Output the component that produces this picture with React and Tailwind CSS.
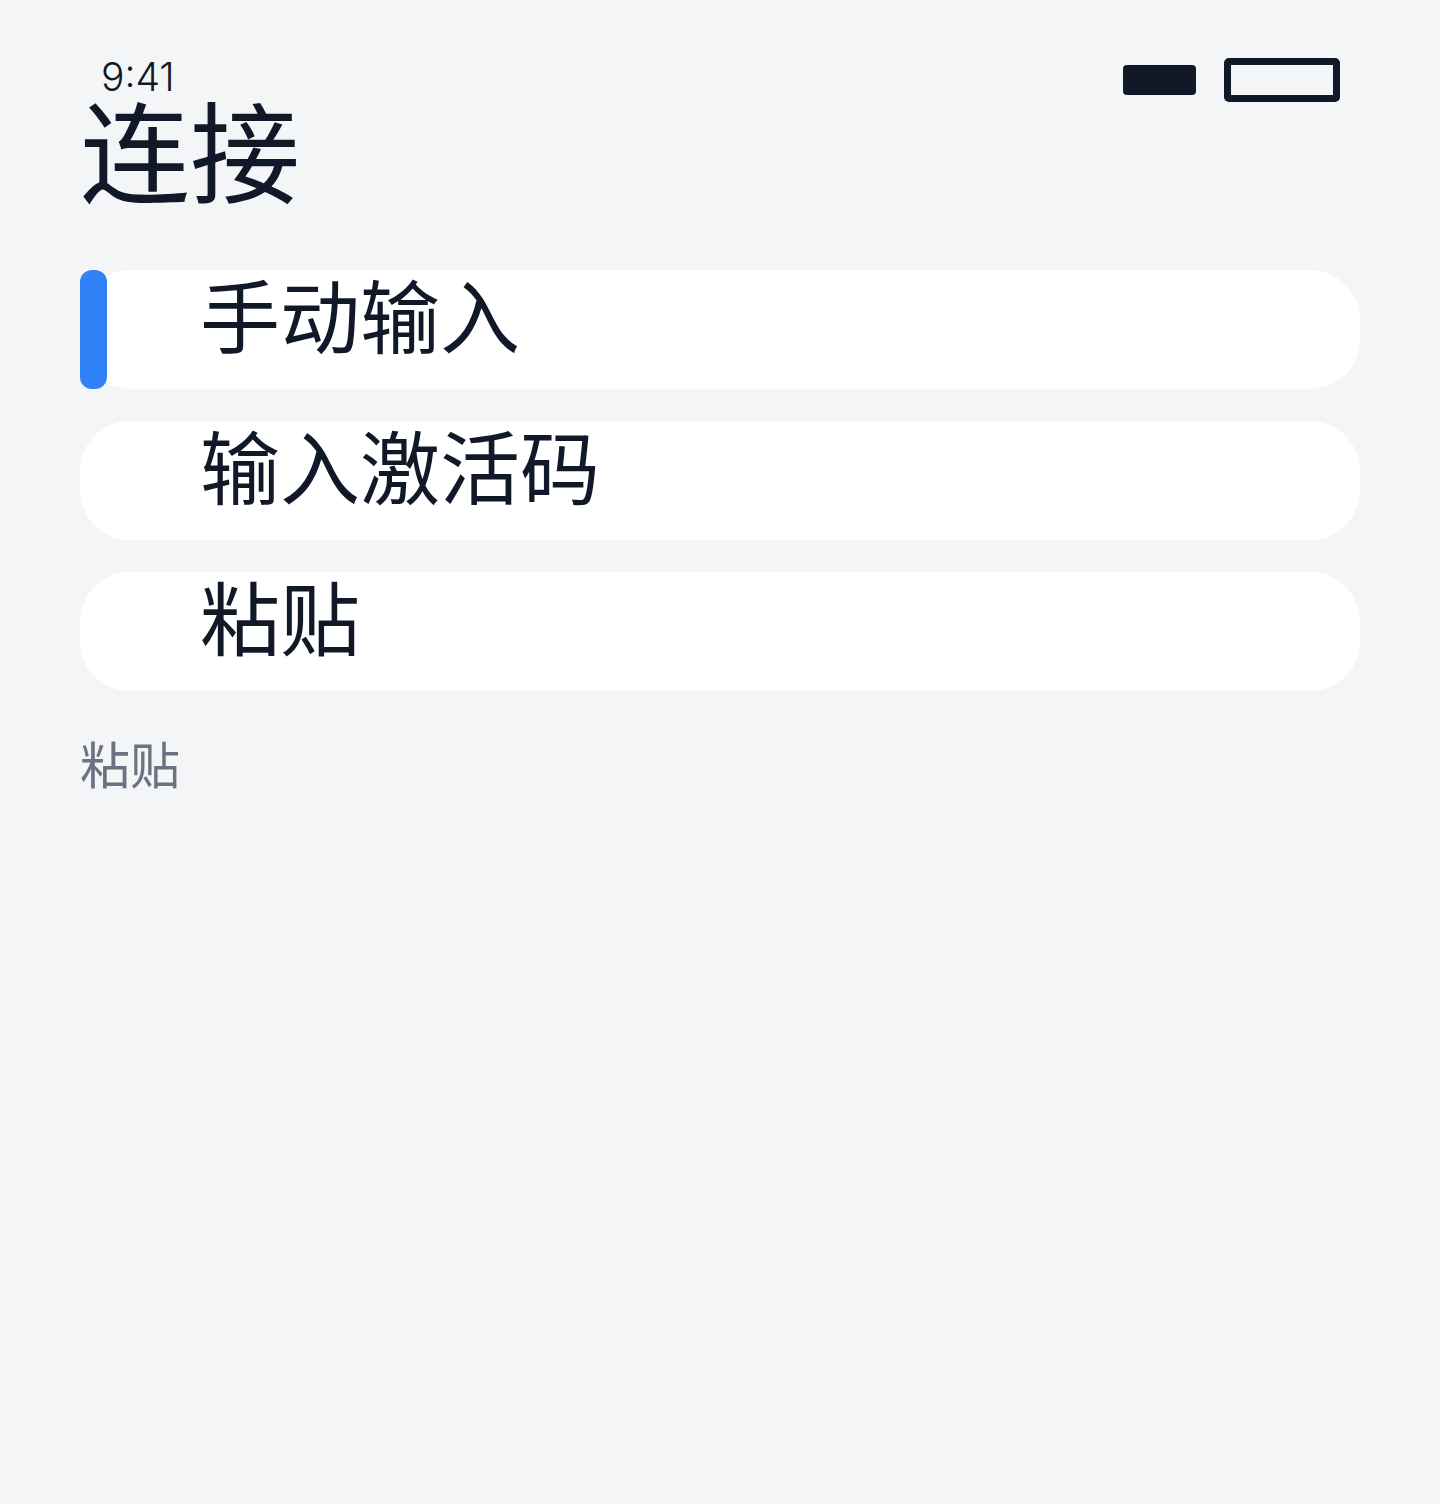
import React from 'react';

const font = { fontFamily: '"Noto Sans CJK SC", "Noto Sans", sans-serif' };

const items = [
  { key: 'manual', label: '手动输入', active: true },
  { key: 'code', label: '输入激活码', active: false },
  { key: 'paste', label: '粘贴', active: false }
];

function StatusBar() {
  return (
    <div className="flex justify-between items-center h-[50px] pl-[21px] pr-5">
      <span className="text-[39px] leading-none font-light text-[#111827] font-['Inter',sans-serif] -mt-[8px]">9:41</span>
      <div className="flex items-center gap-7">
        <div className="w-[73px] h-[30px] rounded-[4px] bg-[#111827]" />
        <div className="w-[116px] h-[44px] rounded-[5px] border-[7px] border-[#111827]" />
      </div>
    </div>
  );
}

export default function App() {
  return (
    <div className="min-h-[1504px] bg-[#f4f5f7] px-20 pt-[55px] flow-root" style={font}>
      <StatusBar />
      <h1 className="text-[110px] leading-[0.77] text-[#111827]">连接</h1>

      <div className="flex flex-col gap-8 mt-[80px]">
        {items.map((item) => (
          <div key={item.key} className="relative h-[119px] bg-white rounded-[50px] flex items-center pl-[120px] pb-[34px]">
            {item.active && (
              <div className="absolute left-0 top-0 bottom-0 w-[27px] rounded-[12px] bg-[#3182f6]" />
            )}
            <span className="text-[80px] leading-none text-[#111827]">{item.label}</span>
          </div>
        ))}
      </div>

      <p className="mt-[46px] text-[50px] leading-none text-[#6b7280]">粘贴</p>
    </div>
  );
}
